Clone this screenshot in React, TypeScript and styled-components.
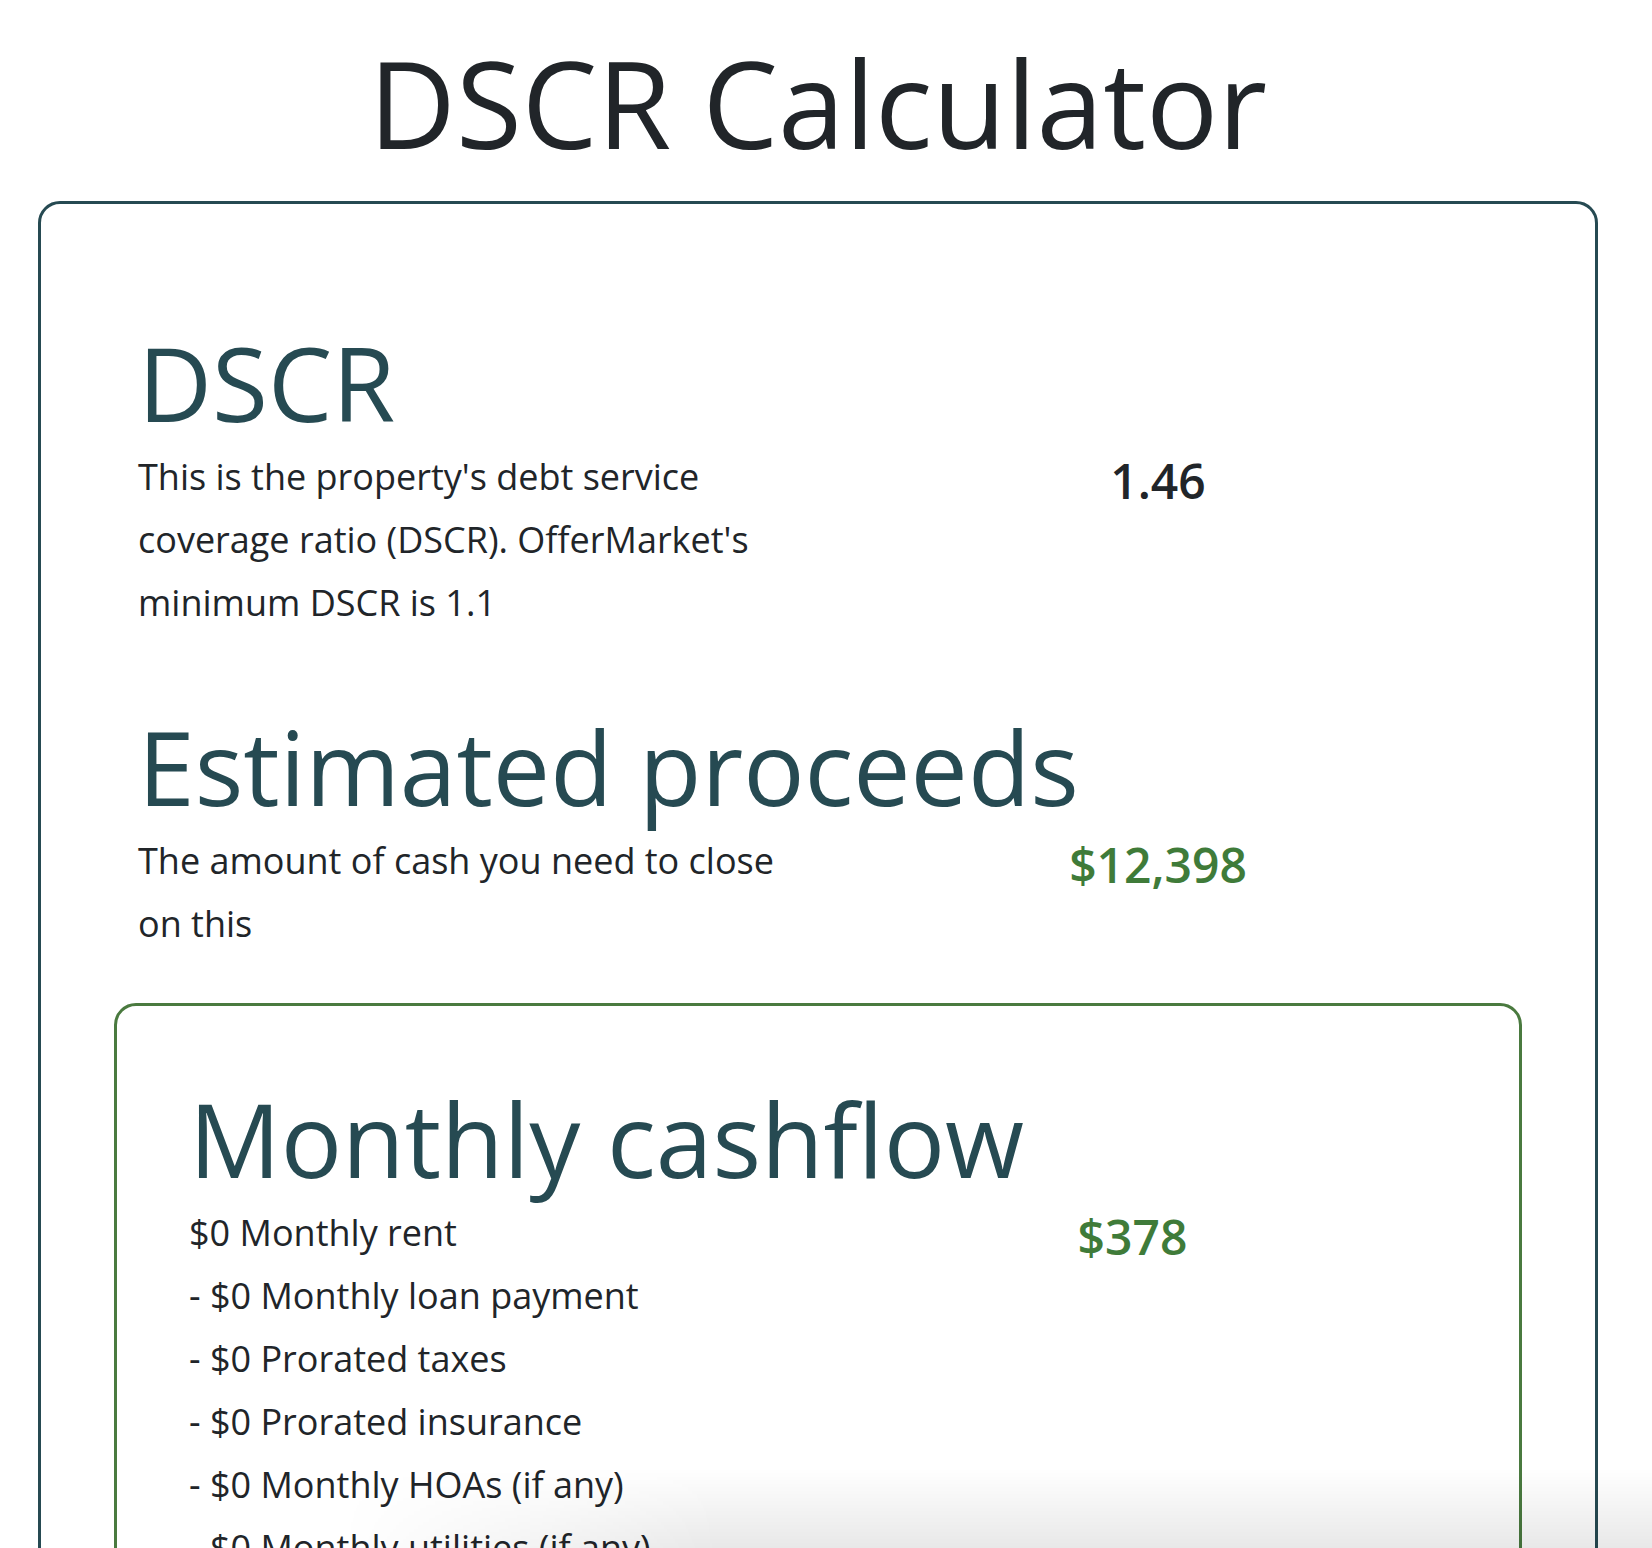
import React from "react";
import styled, { createGlobalStyle } from "styled-components";

const GlobalStyle = createGlobalStyle`
  * { box-sizing: border-box; }
  html, body { margin: 0; padding: 0; background: #ffffff; }
  body {
    font-family: "Open Sans", "Noto Sans", "Liberation Sans", sans-serif;
    color: #212529;
    -webkit-font-smoothing: antialiased;
  }
`;

const Page = styled.div`
  width: 1636px;
  padding-bottom: 80px;
`;

const Title = styled.h1`
  margin: 31px 0 26px;
  font-size: 120px;
  font-weight: 400;
  line-height: 1.2;
  text-align: center;
  color: #212529;
`;

const Card = styled.div<{ $tone: "teal" | "green"; $padTop: number; $padX: number }>`
  border: 3px solid ${(p) => (p.$tone === "teal" ? "#264a52" : "#4a7a3f")};
  border-radius: 22px;
  padding: ${(p) => p.$padTop}px ${(p) => p.$padX}px 48px;
`;

const OuterCard = styled(Card)`
  margin: 0 38px;
`;

const InnerCard = styled(Card)`
  margin-top: 48px;
`;

const Section = styled.section`
  padding: 70px 24px 0;
`;

const Heading = styled.h2`
  margin: 0;
  font-size: 102px;
  font-weight: 400;
  line-height: 125px;
  color: #264a52;
`;

const Row = styled.div`
  display: grid;
  grid-template-columns: minmax(0, 1fr) minmax(0, 1fr);
  align-items: start;
`;

const Description = styled.div`
  max-width: 660px;
  font-size: 36px;
  line-height: 63px;
  color: #212529;
`;

const Line = styled.div`
  white-space: nowrap;
`;

const Value = styled.div<{ $green?: boolean }>`
  text-align: center;
  font-size: 48px;
  font-weight: 600;
  line-height: 1.5;
  color: ${(p) => (p.$green ? "#3f7b39" : "#212529")};
`;

const BottomFade = styled.div`
  position: fixed;
  left: 0;
  right: 0;
  bottom: 0;
  height: 80px;
  pointer-events: none;
  background: linear-gradient(to bottom, rgba(0, 0, 0, 0), rgba(0, 0, 0, 0.09));
  -webkit-mask-image: linear-gradient(to right, transparent 340px, #000 720px);
  mask-image: linear-gradient(to right, transparent 340px, #000 720px);
`;

const cashflowLines = [
  "$0 Monthly rent",
  "- $0 Monthly loan payment",
  "- $0 Prorated taxes",
  "- $0 Prorated insurance",
  "- $0 Monthly HOAs (if any)",
  "- $0 Monthly utilities (if any)",
];

export default function App() {
  return (
    <>
      <GlobalStyle />
      <Page>
        <Title>DSCR Calculator</Title>
        <OuterCard $tone="teal" $padTop={46} $padX={73}>
          <Section>
            <Heading>DSCR</Heading>
            <Row>
              <Description>
                This is the property's debt service coverage ratio (DSCR). OfferMarket's minimum DSCR is 1.1
              </Description>
              <Value>1.46</Value>
            </Row>
          </Section>
          <Section>
            <Heading>Estimated proceeds</Heading>
            <Row>
              <Description>The amount of cash you need to close on this</Description>
              <Value $green>$12,398</Value>
            </Row>
          </Section>
          <InnerCard $tone="green" $padTop={0} $padX={48}>
            <Section>
              <Heading>Monthly cashflow</Heading>
              <Row>
                <Description>
                  {cashflowLines.map((l) => (
                    <Line key={l}>{l}</Line>
                  ))}
                </Description>
                <Value $green>$378</Value>
              </Row>
            </Section>
          </InnerCard>
        </OuterCard>
      </Page>
      <BottomFade />
    </>
  );
}
